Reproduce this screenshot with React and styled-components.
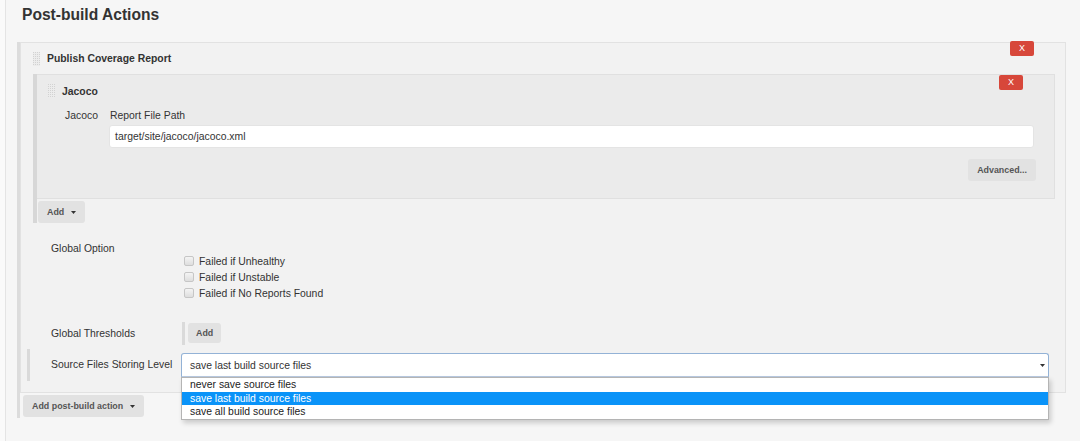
import React from "react";
import styled, { createGlobalStyle } from "styled-components";

const GlobalStyle = createGlobalStyle`
    body {
        margin: 0;
        background: #fafafa;
        font-family: "Liberation Sans", Arial, sans-serif;
        font-size: 10.4px;
        color: #333;
    }
`
const Page = styled.div`
    margin-left: 5px;
    border-left: 1px solid #e4e4e4;
    background: #f6f6f6;
    height: 441px;
    padding: 0 14px 0 11px;
    box-sizing: border-box;
    overflow: hidden;
`
const Title = styled.h2`
    margin: 0;
    height: 42px;
    box-sizing: border-box;
    padding: 5px 0 0 5px;
    font-size: 15.6px;
    line-height: 20px;
    font-weight: bold;
    color: #333;
`
const Section = styled.div`
    border-left: 3px solid #dcdcdc;
    padding-bottom: 1px;
`
const Chunk = styled.div`
    position: relative;
    background: #f2f2f2;
    border: 1px solid #e2e2e2;
    padding-bottom: 11px;
`
const DeleteButton = styled.button`
    position: absolute;
    top: ${props => props.nested ? "0" : "-2px"};
    right: 31px;
    width: 24px;
    height: 15px;
    padding: 0;
    border: none;
    border-radius: 2px;
    background: #d7473a;
    color: #fff;
    font-family: inherit;
    font-size: 9px;
    line-height: 15px;
`
const ChunkHeader = styled.div`
    display: flex;
    align-items: center;
    height: ${props => props.nested ? "32px" : "31px"};
    padding-left: ${props => props.nested ? "11px" : "12px"};
    font-weight: bold;
    font-size: 10.4px;
    color: #333;
`
const GripBox = styled.span`
    display: inline-flex;
    margin-right: 7px;
`
const Grip = () => (
    <GripBox>
        <svg width="7" height="14" viewBox="0 0 7 14">
            <rect x="0" y="0" width="7" height="14" fill="#ececec" />
            {[0, 2, 4, 6].map(x =>
                [0, 2, 4, 6, 8, 10, 12].map(y => (
                    <rect key={x + "-" + y} x={x} y={y} width="1" height="1" fill="#d2d2d2" />
                ))
            )}
        </svg>
    </GripBox>
)
const Repeated = styled.div`
    margin: 0 10px 0 12px;
    border-left: 4px solid #d7d7d7;
`
const InnerChunk = styled.div`
    position: relative;
    background: #ebebeb;
    border: 1px solid #e0e0e0;
    border-left: none;
`
const FieldGrid = styled.div`
    display: grid;
    grid-template-columns: 72px 1fr;
    margin-top: 2px;
`
const FieldLabel = styled.div`
    text-align: right;
    padding-right: 11px;
    line-height: 14px;
`
const FieldTitle = styled.div`
    line-height: 14px;
    padding-left: 1px;
`
const TextInput = styled.div`
    grid-column: 2;
    margin: 2px 20px 0 0;
    height: 23px;
    box-sizing: border-box;
    background: #fff;
    border: 1px solid #e4e4e4;
    border-radius: 3px;
    padding-left: 5px;
    line-height: 21px;
    color: #333;
`
const AdvancedRow = styled.div`
    display: flex;
    justify-content: flex-end;
    padding: 11px 18px 17px 0;
`
const Button = styled.button`
    display: inline-flex;
    align-items: center;
    gap: ${props => props.caret ? "7px" : "0"};
    height: ${props => props.small ? "20px" : "22px"};
    padding: 0 ${props => props.small ? "8px" : "9px"};
    margin: ${props => props.margin || "0"};
    border: none;
    border-radius: 3px;
    background: #e2e2e2;
    color: #555;
    font-family: inherit;
    font-size: 8.9px;
    font-weight: bold;
`
const Caret = () => (
    <svg width="5" height="3" viewBox="0 0 5 3">
        <path d="M0 0 L5 0 L2.5 3 Z" fill="#333" />
    </svg>
)
const Row = styled.div`
    display: grid;
    grid-template-columns: 151px 1fr;
    align-items: ${props => props.center ? "center" : "start"};
    margin: ${props => props.top} 16px 0 6px;
    border-left: 3px solid ${props => props.marked ? "#dadada" : "transparent"};
    padding: ${props => props.marked ? "4px 0" : "0"};
`
const RowLabel = styled.div`
    padding-left: 21px;
    line-height: 16px;
    color: #333;
`
const CheckList = styled.div`
    padding: 12px 0 0 3px;
`
const CheckItem = styled.label`
    display: flex;
    align-items: center;
    height: 16px;
`
const CheckBox = styled.span`
    width: 10px;
    height: 10px;
    box-sizing: border-box;
    margin-right: 5px;
    border: 1px solid #c6c6c6;
    border-radius: 2px;
    background: linear-gradient(#f4f4f4, #dedede);
`
const RepeatBar = styled.div`
    margin-left: 1px;
    border-left: 3px solid #dadada;
    padding: 1px 0 2px 3px;
`
const SelectWrap = styled.div`
    position: relative;
`
const SelectBox = styled.div`
    display: flex;
    align-items: center;
    justify-content: space-between;
    height: 24px;
    box-sizing: border-box;
    padding: 0 3px 0 8px;
    background: #fff;
    border: 1px solid #93b2d6;
    border-bottom-color: #b9cbe2;
    border-radius: 3px 3px 0 0;
    color: #333;
`
const OptionList = styled.div`
    position: absolute;
    top: 100%;
    left: 0;
    right: 0;
    z-index: 2;
    background: #fff;
    border: 1px solid #b4b4b4;
    box-shadow: 2px 3px 5px rgba(0, 0, 0, 0.18);
`
const Option = styled.div`
    height: 13.5px;
    line-height: 13.5px;
    padding-left: 8px;
    background: ${props => props.selected ? "#0a93f8" : "#fff"};
    color: ${props => props.selected ? "#fff" : "#222"};
`

const options = [
    "never save source files",
    "save last build source files",
    "save all build source files",
]

export default function App() {
    return (
        <>
            <GlobalStyle />
            <Page>
                <Title>Post-build Actions</Title>
                <Section>
                    <Chunk>
                        <DeleteButton>X</DeleteButton>
                        <ChunkHeader><Grip />Publish Coverage Report</ChunkHeader>
                        <Repeated>
                            <InnerChunk>
                                <DeleteButton nested>X</DeleteButton>
                                <ChunkHeader nested><Grip />Jacoco</ChunkHeader>
                                <FieldGrid>
                                    <FieldLabel>Jacoco</FieldLabel>
                                    <FieldTitle>Report File Path</FieldTitle>
                                    <TextInput>target/site/jacoco/jacoco.xml</TextInput>
                                </FieldGrid>
                                <AdvancedRow>
                                    <Button>Advanced...</Button>
                                </AdvancedRow>
                            </InnerChunk>
                            <Button caret margin="2px 0 0 1px">Add <Caret /></Button>
                        </Repeated>
                        <Row top="18px">
                            <RowLabel>Global Option</RowLabel>
                            <CheckList>
                                <CheckItem><CheckBox />Failed if Unhealthy</CheckItem>
                                <CheckItem><CheckBox />Failed if Unstable</CheckItem>
                                <CheckItem><CheckBox />Failed if No Reports Found</CheckItem>
                            </CheckList>
                        </Row>
                        <Row top="21px" center>
                            <RowLabel>Global Thresholds</RowLabel>
                            <RepeatBar>
                                <Button small>Add</Button>
                            </RepeatBar>
                        </Row>
                        <Row top="4px" center marked>
                            <RowLabel>Source Files Storing Level</RowLabel>
                            <SelectWrap>
                                <SelectBox>
                                    save last build source files
                                    <Caret />
                                </SelectBox>
                                <OptionList>
                                    {options.map(o => (
                                        <Option key={o} selected={o === options[1]}>{o}</Option>
                                    ))}
                                </OptionList>
                            </SelectWrap>
                        </Row>
                    </Chunk>
                    <Button caret margin="2px 0 0 3px">Add post-build action <Caret /></Button>
                </Section>
            </Page>
        </>
    )
}
